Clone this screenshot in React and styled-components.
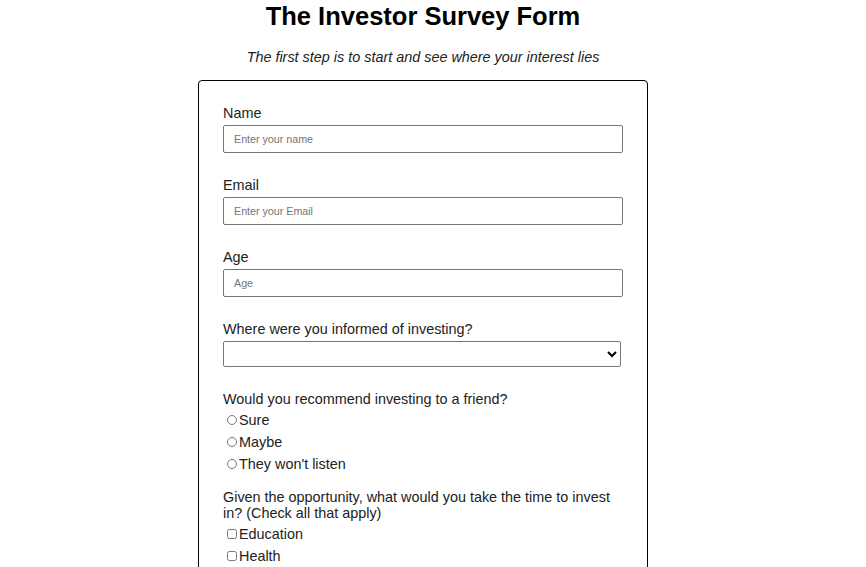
import React from "react";
import styled, { createGlobalStyle } from "styled-components";

const Global = createGlobalStyle`
  html, body { margin: 0; padding: 0; overflow: hidden; background: #fff; }
  body { font-family: "Liberation Sans", Arial, sans-serif; color: #222; }
`;

const Page = styled.main`
  display: flex;
  flex-direction: column;
  align-items: center;
  padding-right: 20px;
`;

const Title = styled.h1`
  margin: 1px 0 0;
  font-size: 25.5px;
  line-height: 30px;
  font-weight: 700;
  color: #000;
`;

const Subtitle = styled.p`
  margin: 18px 0 0;
  font-size: 14.4px;
  line-height: 16px;
  font-style: italic;
  color: #222;
`;

const Card = styled.form`
  box-sizing: border-box;
  width: 450px;
  margin-top: 15px;
  padding: 24px 24px 40px;
  border: 1px solid #000;
  border-radius: 4px;
  display: flex;
  flex-direction: column;
`;

const Group = styled.div`
  display: flex;
  flex-direction: column;
  margin-bottom: ${(p) => p.$gap || 24}px;
`;

const Label = styled.label`
  font-size: 14.4px;
  line-height: 16px;
  color: #222;
  margin-bottom: ${(p) => p.$gap ?? 4}px;
`;

const TextInput = styled.input`
  box-sizing: border-box;
  width: 400px;
  height: 28px;
  margin: 0;
  padding: 0 10px;
  border: 1px solid #767676;
  border-radius: 2px;
  font-family: "Liberation Sans", Arial, sans-serif;
  font-size: 10.7px;
  color: #222;
  &::placeholder { color: #757575; }
`;

const Select = styled.select`
  box-sizing: border-box;
  width: 398px;
  height: 26px;
  margin: 0;
  border: 1px solid #767676;
  border-radius: 2px;
  background: #fff;
  font-family: "Liberation Sans", Arial, sans-serif;
  font-size: 13px;
`;

const Option = styled.label`
  display: flex;
  align-items: center;
  height: 22px;
  font-size: 14.4px;
  color: #222;
`;

const Choice = styled.input`
  width: 10px;
  height: 10px;
  margin: 0 2px 0 4px;
`;

export default function App() {
  return (
    <>
      <Global />
      <Page>
        <Title>The Investor Survey Form</Title>
        <Subtitle>The first step is to start and see where your interest lies</Subtitle>
        <Card onSubmit={(e) => e.preventDefault()}>
          <Group>
            <Label htmlFor="name">Name</Label>
            <TextInput id="name" type="text" placeholder="Enter your name" />
          </Group>
          <Group>
            <Label htmlFor="email">Email</Label>
            <TextInput id="email" type="email" placeholder="Enter your Email" />
          </Group>
          <Group>
            <Label htmlFor="age">Age</Label>
            <TextInput id="age" type="number" placeholder="Age" />
          </Group>
          <Group>
            <Label htmlFor="source">Where were you informed of investing?</Label>
            <Select id="source" defaultValue="">
              <option value=""></option>
              <option value="friends">Friends</option>
              <option value="news">News</option>
              <option value="internet">Internet</option>
            </Select>
          </Group>
          <Group $gap={14}>
            <Label $gap={2}>Would you recommend investing to a friend?</Label>
            <Option><Choice type="radio" name="rec" value="sure" />Sure</Option>
            <Option><Choice type="radio" name="rec" value="maybe" />Maybe</Option>
            <Option><Choice type="radio" name="rec" value="no" />They won't listen</Option>
          </Group>
          <Group>
            <Label $gap={2}>Given the opportunity, what would you take the time to invest in? (Check all that apply)</Label>
            <Option><Choice type="checkbox" value="education" />Education</Option>
            <Option><Choice type="checkbox" value="health" />Health</Option>
            <Option><Choice type="checkbox" value="tech" />Technology</Option>
            <Option><Choice type="checkbox" value="energy" />Energy</Option>
          </Group>
        </Card>
      </Page>
    </>
  );
}
